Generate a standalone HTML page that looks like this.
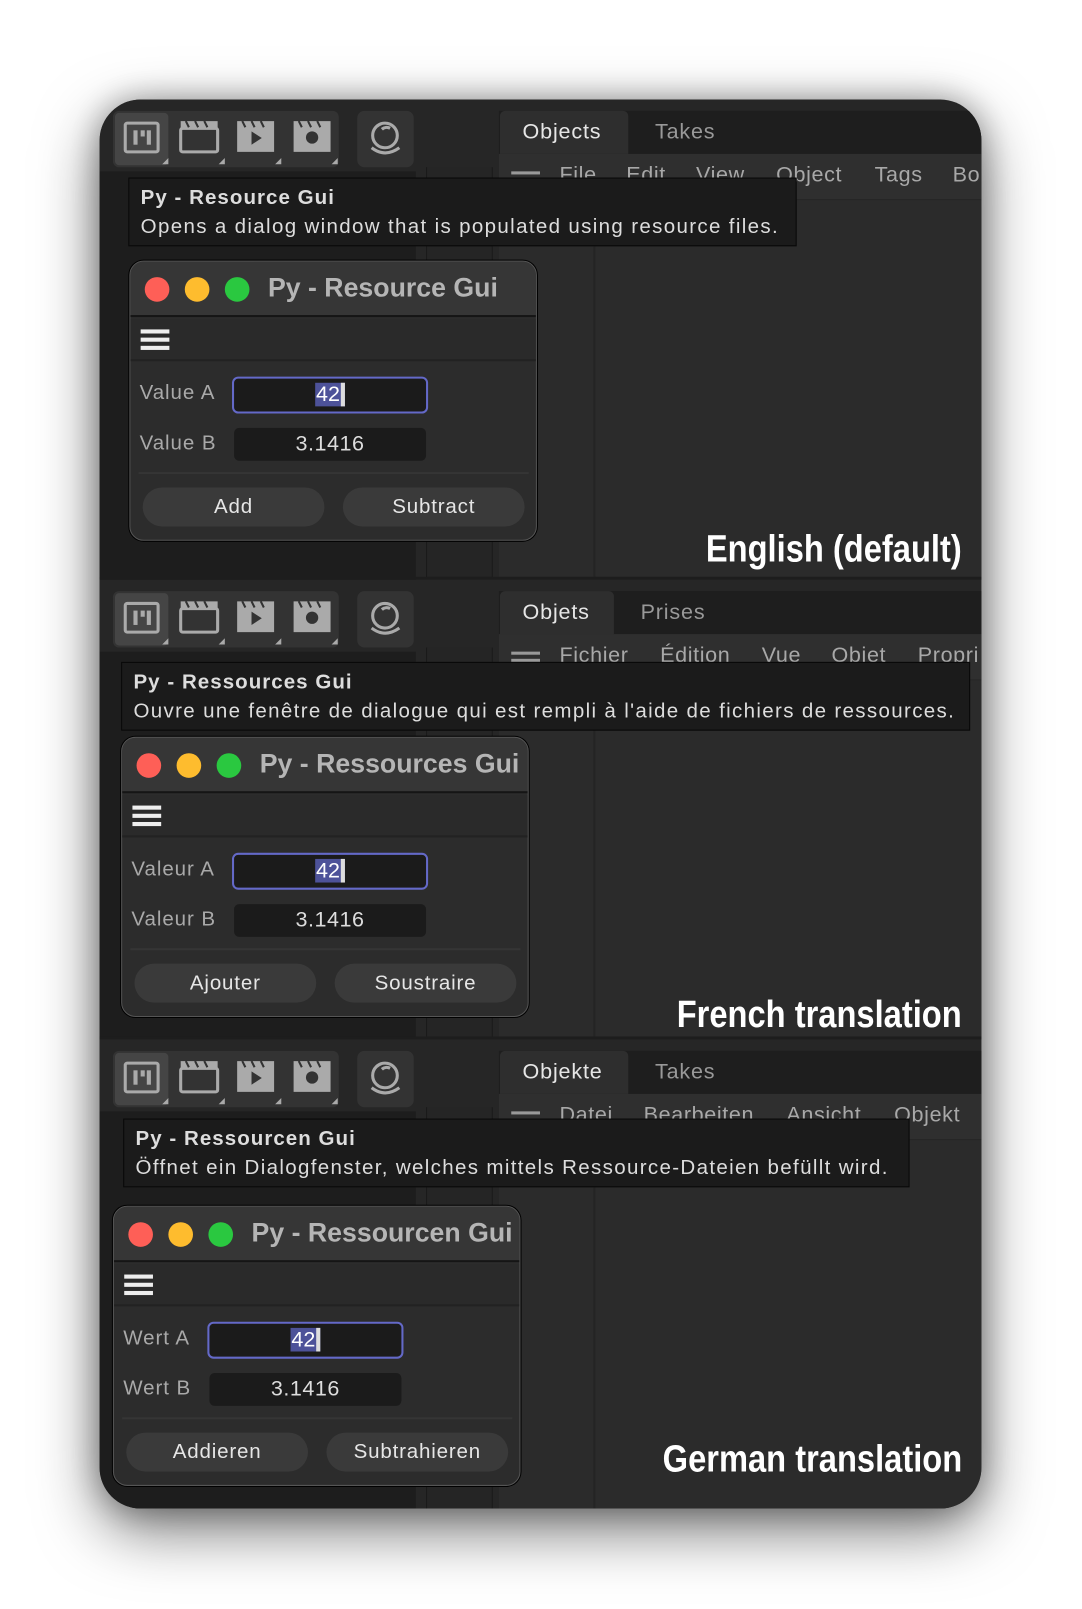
<!DOCTYPE html>
<html><head><meta charset="utf-8"><style>
*{margin:0;padding:0;box-sizing:border-box}
html,body{width:1082px;height:1609px;overflow:hidden;background:#fff;font-family:"Liberation Sans",sans-serif}
#wrap{position:absolute;left:0;top:0;width:1054px;height:1568px;transform:scale(1.0266,1.0262);transform-origin:0 0}
.panel{position:absolute;left:97px;top:97px;width:859px;height:1373px;border-radius:40px;background:#262626;overflow:hidden;box-shadow:0 20px 60px rgba(0,0,0,.55),0 0 30px rgba(0,0,0,.3)}
.sec{position:absolute;left:0;width:859px;overflow:hidden}
.a{position:absolute}
.vp{left:0;top:70px;width:308px;height:400px;background:#1d1d1d}
.tb{left:0;top:0;width:308px;height:70px;background:#262626}
.grp{left:13px;top:11px;width:220px;height:55px;background:#333;border-radius:6px}
.btn1{left:15px;top:13px;width:52px;height:51px;background:#454545;border-radius:4px}
.sph{left:251px;top:11px;width:55px;height:55px;background:#333;border-radius:7px}
.col{left:318px;top:66px;width:65px;height:400px;background:#252525;border-left:1px solid #1a1a1a;border-right:1px solid #1a1a1a}
.obj{left:389px;top:11px;width:470px;height:460px;background:#2b2b2b}
.tabs{left:0;top:0;width:470px;height:42px;background:#1e1e1e}
.tab{left:1px;top:0;height:42px;background:#2e2e2e;color:#e6e6e6;font-size:21px;line-height:42px;padding-left:22px;border-radius:5px 5px 0 0;letter-spacing:.8px}
.tab2{top:0;color:#999;font-size:21px;line-height:42px;letter-spacing:.8px}
.menu{left:0;top:42px;width:470px;height:45px;background:#2f2f2f;border-bottom:1px solid #262626;color:#a8a8a8;font-size:21px;line-height:42px;white-space:nowrap;letter-spacing:.6px}
.vline{left:92px;top:87px;width:2px;height:380px;background:#242424}
.ham{width:28px;height:3px;background:#999;box-shadow:0 7px 0 #999}
.tip{background:#1b1b1b;border:1px solid #080808;color:#ddd;font-size:20px;padding:5px 11px;line-height:28px;white-space:nowrap;letter-spacing:1.3px}
.tip b{font-weight:bold;display:block;letter-spacing:1px}
.dlg{width:397px;height:273px;background:#2c2c2c;border:1.5px solid #555;border-radius:14px;overflow:hidden;box-shadow:0 0 0 1px #000}
.tbar{left:0;top:0;width:100%;height:54px;background:#363636;border-bottom:2px solid #151515}
.tl{width:24px;height:24px;border-radius:50%;top:15px}
.title{top:10px;font-size:26px;font-weight:bold;color:#b5b5b5;white-space:nowrap}
.mb{left:0;top:56px;width:100%;height:41px;border-bottom:2px solid #222;background:#2a2a2a}
.hb{left:10px;top:10px;width:28px;height:4px;background:#eee;box-shadow:0 8px 0 #eee,0 16px 0 #eee}
.lbl{color:#a9a9a9;font-size:20px;white-space:nowrap;letter-spacing:.9px}
.fa{height:36px;width:191px;border:2px solid #6469c8;border-radius:6px;background:#1b1b1b;text-align:center;font-size:21px;color:#fff;line-height:32px}
.fa span{background:#4d5299;padding:0 1px;border-right:4px solid #ddd}
.fb{height:32px;width:187px;border-radius:5px;background:#1b1b1b;text-align:center;font-size:21px;color:#ddd;line-height:32px;letter-spacing:.5px}
.sep{height:2px;background:#353535}
.pb{height:38px;width:177px;border-radius:19px;background:#3a3a3a;color:#e6e6e6;text-align:center;font-size:20px;line-height:38px;letter-spacing:.8px}
.big{right:19px;color:#fff;font-family:"Liberation Sans Narrow","Liberation Sans",sans-serif;font-weight:bold;font-size:37px;white-space:nowrap;transform:scaleX(.86);transform-origin:right}
.bsep{left:0;height:3px;width:859px;background:#1d1d1d}
</style></head><body><div id="wrap"><div class="panel">

<div class="sec" style="top:0;height:468px">
 <div class="a vp"></div><div class="a tb"></div>
 <div class="a grp"></div><div class="a btn1"></div>
 <svg class="a" style="left:13px;top:11px" width="220" height="55" viewBox="0 0 220 55"><g fill="none" stroke="#aaa" stroke-width="3"><rect x="12" y="12" width="32" height="28" rx="2"/><rect x="66" y="17" width="36" height="23" rx="2"/></g><g fill="#aaa"><rect x="20" y="19" width="4" height="14"/><rect x="27" y="19" width="4" height="6"/><rect x="33" y="19" width="4" height="14"/><path d="M66 10h36v7H66z M121 10h36v30h-36z M176 10h36v30h-36z"/><path d="M48 52l6-6v6z M103 52l6-6v6z M158 52l6-6v6z M213 52l6-6v6z"/></g><path d="M135 20v13l10-6.5z" fill="#333"/><circle cx="194" cy="26" r="6" fill="#333"/><g stroke="#333" stroke-width="2"><path d="M71 10l3 6M80 10l3 6M89 10l3 6M126 10l3 6M135 10l3 6M144 10l3 6M181 10l3 6M190 10l3 6M199 10l3 6"/></g></svg>
 <div class="a sph"></div>
 <svg class="a" style="left:251px;top:11px" width="55" height="55"><g fill="none" stroke="#aaa" stroke-width="3"><circle cx="27" cy="24" r="12"/><path d="M14 36q13 10 27 0"/><path d="M24 18a7 7 0 0 1 8-1"/></g></svg>
 <div class="a col"></div>
 <div class="a obj"><div class="a tabs"></div><div class="a tab" style="width:125px">Objects</div><div class="a tab2" style="left:152px">Takes</div>
  <div class="a menu"><div class="a ham" style="left:12px;top:17px"></div><span class="a" style="left:59px">File</span><span class="a" style="left:124px">Edit</span><span class="a" style="left:192px">View</span><span class="a" style="left:270px">Object</span><span class="a" style="left:366px">Tags</span><span class="a" style="left:442px">Bo</span></div>
  <div class="a vline"></div></div>
 <div class="a tip" style="left:28px;top:76px;width:651px;height:67px"><b>Py - Resource Gui</b>Opens a dialog window that is populated using resource files.</div>
 <div class="a dlg" style="left:29px;top:157px">
  <div class="a tbar"></div><div class="a tl" style="left:14px;background:#fe5f57"></div><div class="a tl" style="left:53px;background:#febc2e"></div><div class="a tl" style="left:92px;background:#2ac840"></div><div class="a title" style="left:134px">Py - Resource Gui</div>
  <div class="a mb"><div class="a hb"></div></div>
  <div class="a lbl" style="left:9px;top:117px">Value A</div><div class="a fa" style="left:99px;top:112px"><span>42</span></div>
  <div class="a lbl" style="left:9px;top:166px">Value B</div><div class="a fb" style="left:101px;top:162px">3.1416</div>
  <div class="a sep" style="left:8px;top:205px;width:380px"></div>
  <div class="a pb" style="left:12px;top:220px">Add</div><div class="a pb" style="left:207px;top:220px">Subtract</div>
 </div>
 <div class="a big" style="top:417px">English (default)</div>
 <div class="a bsep" style="top:465px"></div>
</div>

<div class="sec" style="top:468px;height:448px">
 <div class="a vp"></div><div class="a tb"></div>
 <div class="a grp"></div><div class="a btn1"></div>
 <svg class="a" style="left:13px;top:11px" width="220" height="55" viewBox="0 0 220 55"><g fill="none" stroke="#aaa" stroke-width="3"><rect x="12" y="12" width="32" height="28" rx="2"/><rect x="66" y="17" width="36" height="23" rx="2"/></g><g fill="#aaa"><rect x="20" y="19" width="4" height="14"/><rect x="27" y="19" width="4" height="6"/><rect x="33" y="19" width="4" height="14"/><path d="M66 10h36v7H66z M121 10h36v30h-36z M176 10h36v30h-36z"/><path d="M48 52l6-6v6z M103 52l6-6v6z M158 52l6-6v6z M213 52l6-6v6z"/></g><path d="M135 20v13l10-6.5z" fill="#333"/><circle cx="194" cy="26" r="6" fill="#333"/><g stroke="#333" stroke-width="2"><path d="M71 10l3 6M80 10l3 6M89 10l3 6M126 10l3 6M135 10l3 6M144 10l3 6M181 10l3 6M190 10l3 6M199 10l3 6"/></g></svg>
 <div class="a sph"></div>
 <svg class="a" style="left:251px;top:11px" width="55" height="55"><g fill="none" stroke="#aaa" stroke-width="3"><circle cx="27" cy="24" r="12"/><path d="M14 36q13 10 27 0"/><path d="M24 18a7 7 0 0 1 8-1"/></g></svg>
 <div class="a col"></div>
 <div class="a obj"><div class="a tabs"></div><div class="a tab" style="width:111px">Objets</div><div class="a tab2" style="left:138px">Prises</div>
  <div class="a menu"><div class="a ham" style="left:12px;top:17px"></div><span class="a" style="left:59px">Fichier</span><span class="a" style="left:157px">Édition</span><span class="a" style="left:256px">Vue</span><span class="a" style="left:324px">Objet</span><span class="a" style="left:408px">Propri</span></div>
  <div class="a vline"></div></div>
 <div class="a tip" style="left:21px;top:80px;width:827px;height:67px"><b>Py - Ressources Gui</b>Ouvre une fenêtre de dialogue qui est rempli à l'aide de fichiers de ressources.</div>
 <div class="a dlg" style="left:21px;top:153px">
  <div class="a tbar"></div><div class="a tl" style="left:14px;background:#fe5f57"></div><div class="a tl" style="left:53px;background:#febc2e"></div><div class="a tl" style="left:92px;background:#2ac840"></div><div class="a title" style="left:134px">Py - Ressources Gui</div>
  <div class="a mb"><div class="a hb"></div></div>
  <div class="a lbl" style="left:9px;top:117px">Valeur A</div><div class="a fa" style="left:107px;top:112px"><span>42</span></div>
  <div class="a lbl" style="left:9px;top:166px">Valeur B</div><div class="a fb" style="left:109px;top:162px">3.1416</div>
  <div class="a sep" style="left:8px;top:205px;width:380px"></div>
  <div class="a pb" style="left:12px;top:220px">Ajouter</div><div class="a pb" style="left:207px;top:220px">Soustraire</div>
 </div>
 <div class="a big" style="top:403px">French translation</div>
 <div class="a bsep" style="top:445px"></div>
</div>

<div class="sec" style="top:916px;height:457px">
 <div class="a vp"></div><div class="a tb"></div>
 <div class="a grp"></div><div class="a btn1"></div>
 <svg class="a" style="left:13px;top:11px" width="220" height="55" viewBox="0 0 220 55"><g fill="none" stroke="#aaa" stroke-width="3"><rect x="12" y="12" width="32" height="28" rx="2"/><rect x="66" y="17" width="36" height="23" rx="2"/></g><g fill="#aaa"><rect x="20" y="19" width="4" height="14"/><rect x="27" y="19" width="4" height="6"/><rect x="33" y="19" width="4" height="14"/><path d="M66 10h36v7H66z M121 10h36v30h-36z M176 10h36v30h-36z"/><path d="M48 52l6-6v6z M103 52l6-6v6z M158 52l6-6v6z M213 52l6-6v6z"/></g><path d="M135 20v13l10-6.5z" fill="#333"/><circle cx="194" cy="26" r="6" fill="#333"/><g stroke="#333" stroke-width="2"><path d="M71 10l3 6M80 10l3 6M89 10l3 6M126 10l3 6M135 10l3 6M144 10l3 6M181 10l3 6M190 10l3 6M199 10l3 6"/></g></svg>
 <div class="a sph"></div>
 <svg class="a" style="left:251px;top:11px" width="55" height="55"><g fill="none" stroke="#aaa" stroke-width="3"><circle cx="27" cy="24" r="12"/><path d="M14 36q13 10 27 0"/><path d="M24 18a7 7 0 0 1 8-1"/></g></svg>
 <div class="a col"></div>
 <div class="a obj"><div class="a tabs"></div><div class="a tab" style="width:125px">Objekte</div><div class="a tab2" style="left:152px">Takes</div>
  <div class="a menu"><div class="a ham" style="left:12px;top:17px"></div><span class="a" style="left:59px">Datei</span><span class="a" style="left:141px">Bearbeiten</span><span class="a" style="left:280px">Ansicht</span><span class="a" style="left:385px">Objekt</span></div>
  <div class="a vline"></div></div>
 <div class="a tip" style="left:23px;top:77px;width:766px;height:67px"><b>Py - Ressourcen Gui</b>Öffnet ein Dialogfenster, welches mittels Ressource-Dateien befüllt wird.</div>
 <div class="a dlg" style="left:13px;top:162px">
  <div class="a tbar"></div><div class="a tl" style="left:14px;background:#fe5f57"></div><div class="a tl" style="left:53px;background:#febc2e"></div><div class="a tl" style="left:92px;background:#2ac840"></div><div class="a title" style="left:134px">Py - Ressourcen Gui</div>
  <div class="a mb"><div class="a hb"></div></div>
  <div class="a lbl" style="left:9px;top:117px">Wert A</div><div class="a fa" style="left:91px;top:112px"><span>42</span></div>
  <div class="a lbl" style="left:9px;top:166px">Wert B</div><div class="a fb" style="left:93px;top:162px">3.1416</div>
  <div class="a sep" style="left:8px;top:205px;width:380px"></div>
  <div class="a pb" style="left:12px;top:220px">Addieren</div><div class="a pb" style="left:207px;top:220px">Subtrahieren</div>
 </div>
 <div class="a big" style="top:388px">German translation</div>
</div>

</div></div></body></html>
